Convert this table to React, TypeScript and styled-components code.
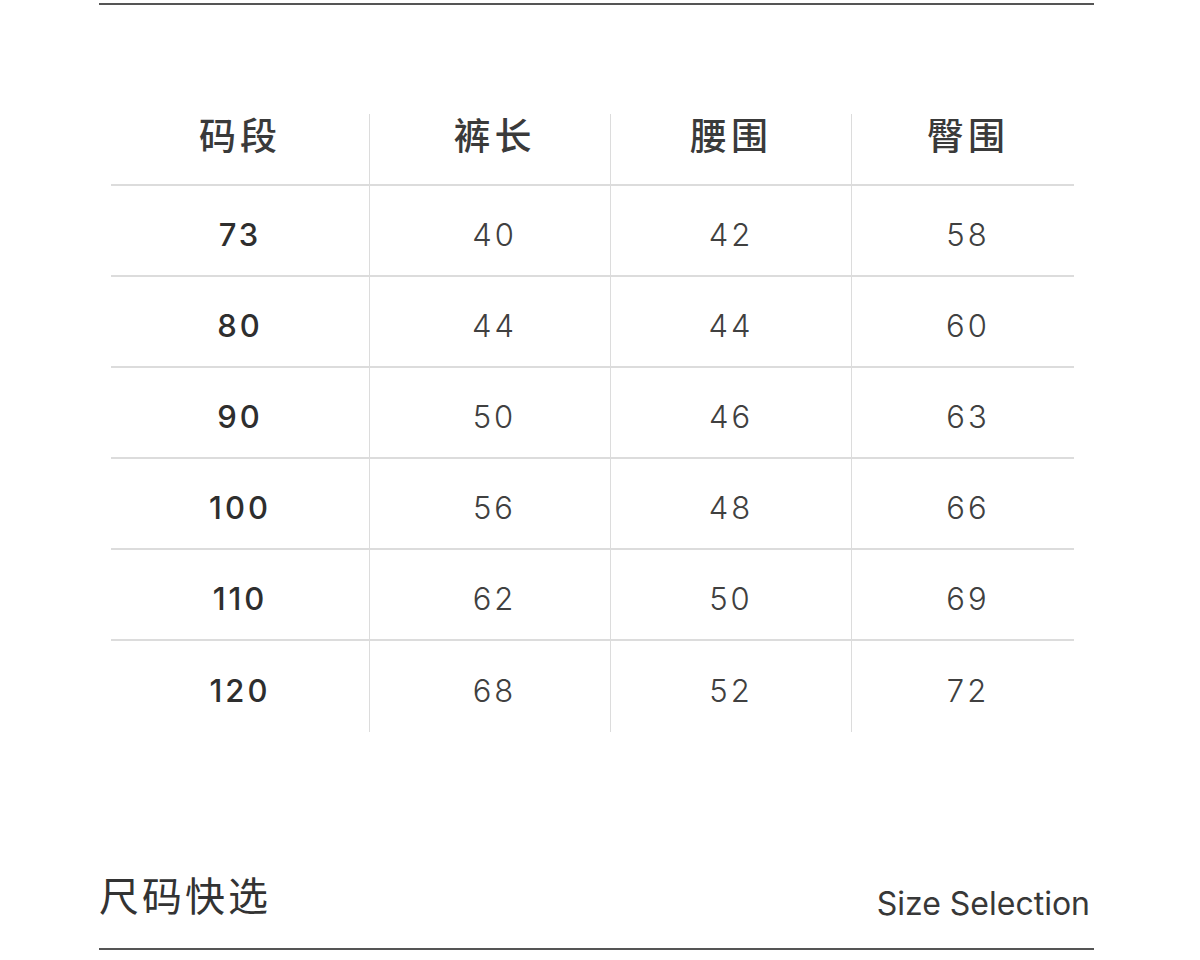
import React from 'react'
import styled, { createGlobalStyle } from 'styled-components'

const GlobalStyle = createGlobalStyle`
  html, body {
    margin: 0;
    padding: 0;
    background: #fff;
  }
  body {
    font-family: Inter, "Noto Sans", "Noto Sans CJK SC", sans-serif;
    color: #333;
  }
`

const headers = ['码段', '裤长', '腰围', '臀围']

const rows = [
  ['73', '40', '42', '58'],
  ['80', '44', '44', '60'],
  ['90', '50', '46', '63'],
  ['100', '56', '48', '66'],
  ['110', '62', '50', '69'],
  ['120', '68', '52', '72'],
]

// the printed chart nudges columns 2 and 4 a bit to the right
const shifts = [0, 9, 0, 10]

const App: React.FC = () => {
  return (
    <Page>
      <GlobalStyle />
      <Rule />
      <Table>
        {headers.map((h, i) => (
          <HeadCell key={h} $first={i === 0} $shift={shifts[i]}>{h}</HeadCell>
        ))}
        {rows.map((row) =>
          row.map((v, i) => (
            <Cell key={row[0] + '-' + i} $first={i === 0} $shift={shifts[i]}>{v}</Cell>
          ))
        )}
      </Table>
      <Footer>
        <Title>尺码快选</Title>
        <SubTitle>Size Selection</SubTitle>
      </Footer>
      <Rule />
    </Page>
  )
}

export const Page = styled.div`
  width: 1200px;
  height: 960px;
  padding: 3px 106px 0 99px;
  box-sizing: border-box;
  display: flex;
  flex-direction: column;
`
export const Rule = styled.div`
  height: 2px;
  background: #555;
  // width: 100%;
`
export const Table = styled.div`
  display: grid;
  grid-template-columns: 258px 241px 241px 223px;
  grid-template-rows: 72px repeat(6, 91px);
  margin: 109px 0 0 12px;
  width: 963px;
`
export const HeadCell = styled.div<{ $first?: boolean; $shift: number }>`
  display: flex;
  align-items: center;
  justify-content: center;
  padding: 0 0 30px ${(p) => p.$shift}px;
  box-sizing: border-box;
  font-family: "Noto Sans CJK SC", sans-serif;
  font-size: 37px;
  font-weight: 500;
  letter-spacing: 4px;
  color: #3a3a3a;
  border-left: ${(p) => (p.$first ? 'none' : '1px solid #dcdcdc')};
  border-bottom: 2px solid #dcdcdc;
`
export const Cell = styled.div<{ $first?: boolean; $shift: number }>`
  display: flex;
  align-items: center;
  justify-content: center;
  padding: 7px 0 0 ${(p) => p.$shift}px;
  box-sizing: border-box;
  font-family: Inter, "Noto Sans", sans-serif;
  font-size: 31px;
  font-weight: ${(p) => (p.$first ? 500 : 300)};
  letter-spacing: 3px;
  color: ${(p) => (p.$first ? '#2e2e2e' : '#404040')};
  border-left: ${(p) => (p.$first ? 'none' : '1px solid #dcdcdc')};
  border-bottom: 2px solid #dcdcdc;
  &:nth-last-child(-n + 4) {
    border-bottom: none;
  }
`
export const Footer = styled.div`
  display: flex;
  justify-content: space-between;
  align-items: flex-end;
  margin-top: 128px;
  padding-bottom: 28px;
  height: 60px;
  box-sizing: content-box;
`
export const Title = styled.h1`
  margin: 0;
  font-family: "Noto Sans CJK SC", sans-serif;
  font-size: 40px;
  font-weight: 400;
  letter-spacing: 3px;
  color: #333;
  line-height: 1;
  margin-bottom: 6px;
`
export const SubTitle = styled.h2`
  margin: 0 4px 0 0;
  font-family: Inter, "Noto Sans", sans-serif;
  font-size: 32px;
  font-weight: 400;
  color: #383838;
  line-height: 1;
`

export default App
